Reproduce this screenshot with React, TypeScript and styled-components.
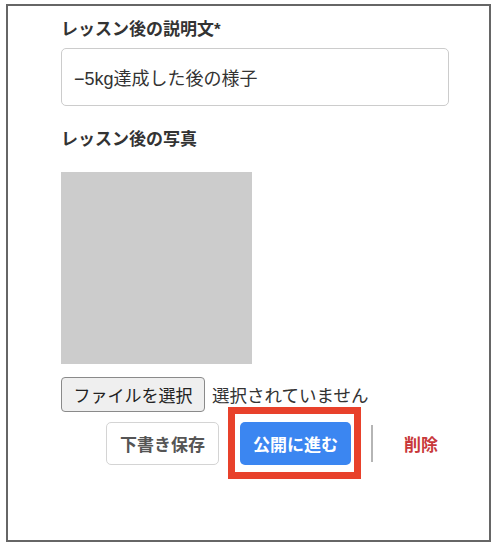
import * as React from 'react';
import styled, { createGlobalStyle } from 'styled-components';

const GlobalStyle = createGlobalStyle`
  html, body {
    margin: 0;
    padding: 0;
    background: #ffffff;
  }
  body {
    font-family: 'Liberation Sans', 'Noto Sans CJK JP', sans-serif;
    color: #333333;
  }
`;

const Frame = styled.div`
  box-sizing: border-box;
  width: 485px;
  height: 538px;
  margin: 4px 0 0 6px;
  border: 2px solid #666666;
  padding: 12px 40px 0 53px;
  display: flex;
  flex-direction: column;
`;

const Label = styled.div<{ $gap?: number }>`
  font-size: 17px;
  font-weight: bold;
  line-height: 24px;
  color: #333333;
  margin-top: ${p => p.$gap ?? 0}px;
`;

const TextInput = styled.input`
  box-sizing: border-box;
  width: 100%;
  height: 58px;
  margin-top: 6px;
  padding: 0 12px;
  border: 1px solid #cccccc;
  border-radius: 5px;
  font-family: inherit;
  font-size: 18px;
  color: #333333;
  outline: none;
`;

const Preview = styled.div`
  width: 191px;
  height: 192px;
  margin-top: 20px;
  background: #cccccc;
`;

const FileRow = styled.div`
  display: flex;
  align-items: center;
  gap: 7px;
  margin-top: 13px;
  height: 35px;
`;

const FileButton = styled.button`
  box-sizing: border-box;
  height: 35px;
  width: 144px;
  padding: 0;
  border: 1px solid #8a8a8a;
  border-radius: 4px;
  background: #efefef;
  font-family: inherit;
  font-size: 17px;
  color: #222222;
`;

const FileStatus = styled.span`
  font-size: 17.5px;
  color: #333333;
`;

const Actions = styled.div`
  display: flex;
  justify-content: flex-end;
  align-items: center;
  gap: 20px;
  margin-top: 10px;
`;

const Button = styled.button<{ $variant: 'outline' | 'primary' | 'danger' }>`
  box-sizing: border-box;
  height: 43px;
  padding: 0 ${p => (p.$variant === 'danger' ? 11 : 13)}px;
  border-radius: 5px;
  font-family: inherit;
  font-size: 17px;
  font-weight: bold;
  cursor: pointer;
  border: ${p => (p.$variant === 'outline' ? '1px solid #d4d4d4' : 'none')};
  background: ${p => (p.$variant === 'primary' ? '#3b86f1' : '#ffffff')};
  color: ${p =>
    p.$variant === 'primary' ? '#ffffff' : p.$variant === 'danger' ? '#c8383a' : '#555555'};
`;

const Highlight = styled.div`
  position: relative;
  display: flex;
  margin-left: 1px;

  &::after {
    content: '';
    position: absolute;
    top: -15px;
    left: -12px;
    right: -10px;
    bottom: -14px;
    border: 7px solid #e8412b;
    pointer-events: none;
  }
`;

const Divider = styled.div`
  width: 2px;
  height: 37px;
  background: #b5b5b5;
`;

export default function App() {
  const [text, setText] = React.useState('−5kg達成した後の様子');

  return (
    <>
      <GlobalStyle />
      <Frame>
        <Label>レッスン後の説明文*</Label>
        <TextInput value={text} onChange={e => setText(e.target.value)} />

        <Label $gap={22}>レッスン後の写真</Label>
        <Preview />

        <FileRow>
          <FileButton type="button">ファイルを選択</FileButton>
          <FileStatus>選択されていません</FileStatus>
        </FileRow>

        <Actions>
          <Button $variant="outline">下書き保存</Button>
          <Highlight>
            <Button $variant="primary">公開に進む</Button>
          </Highlight>
          <Divider />
          <Button $variant="danger">削除</Button>
        </Actions>
      </Frame>
    </>
  );
}
